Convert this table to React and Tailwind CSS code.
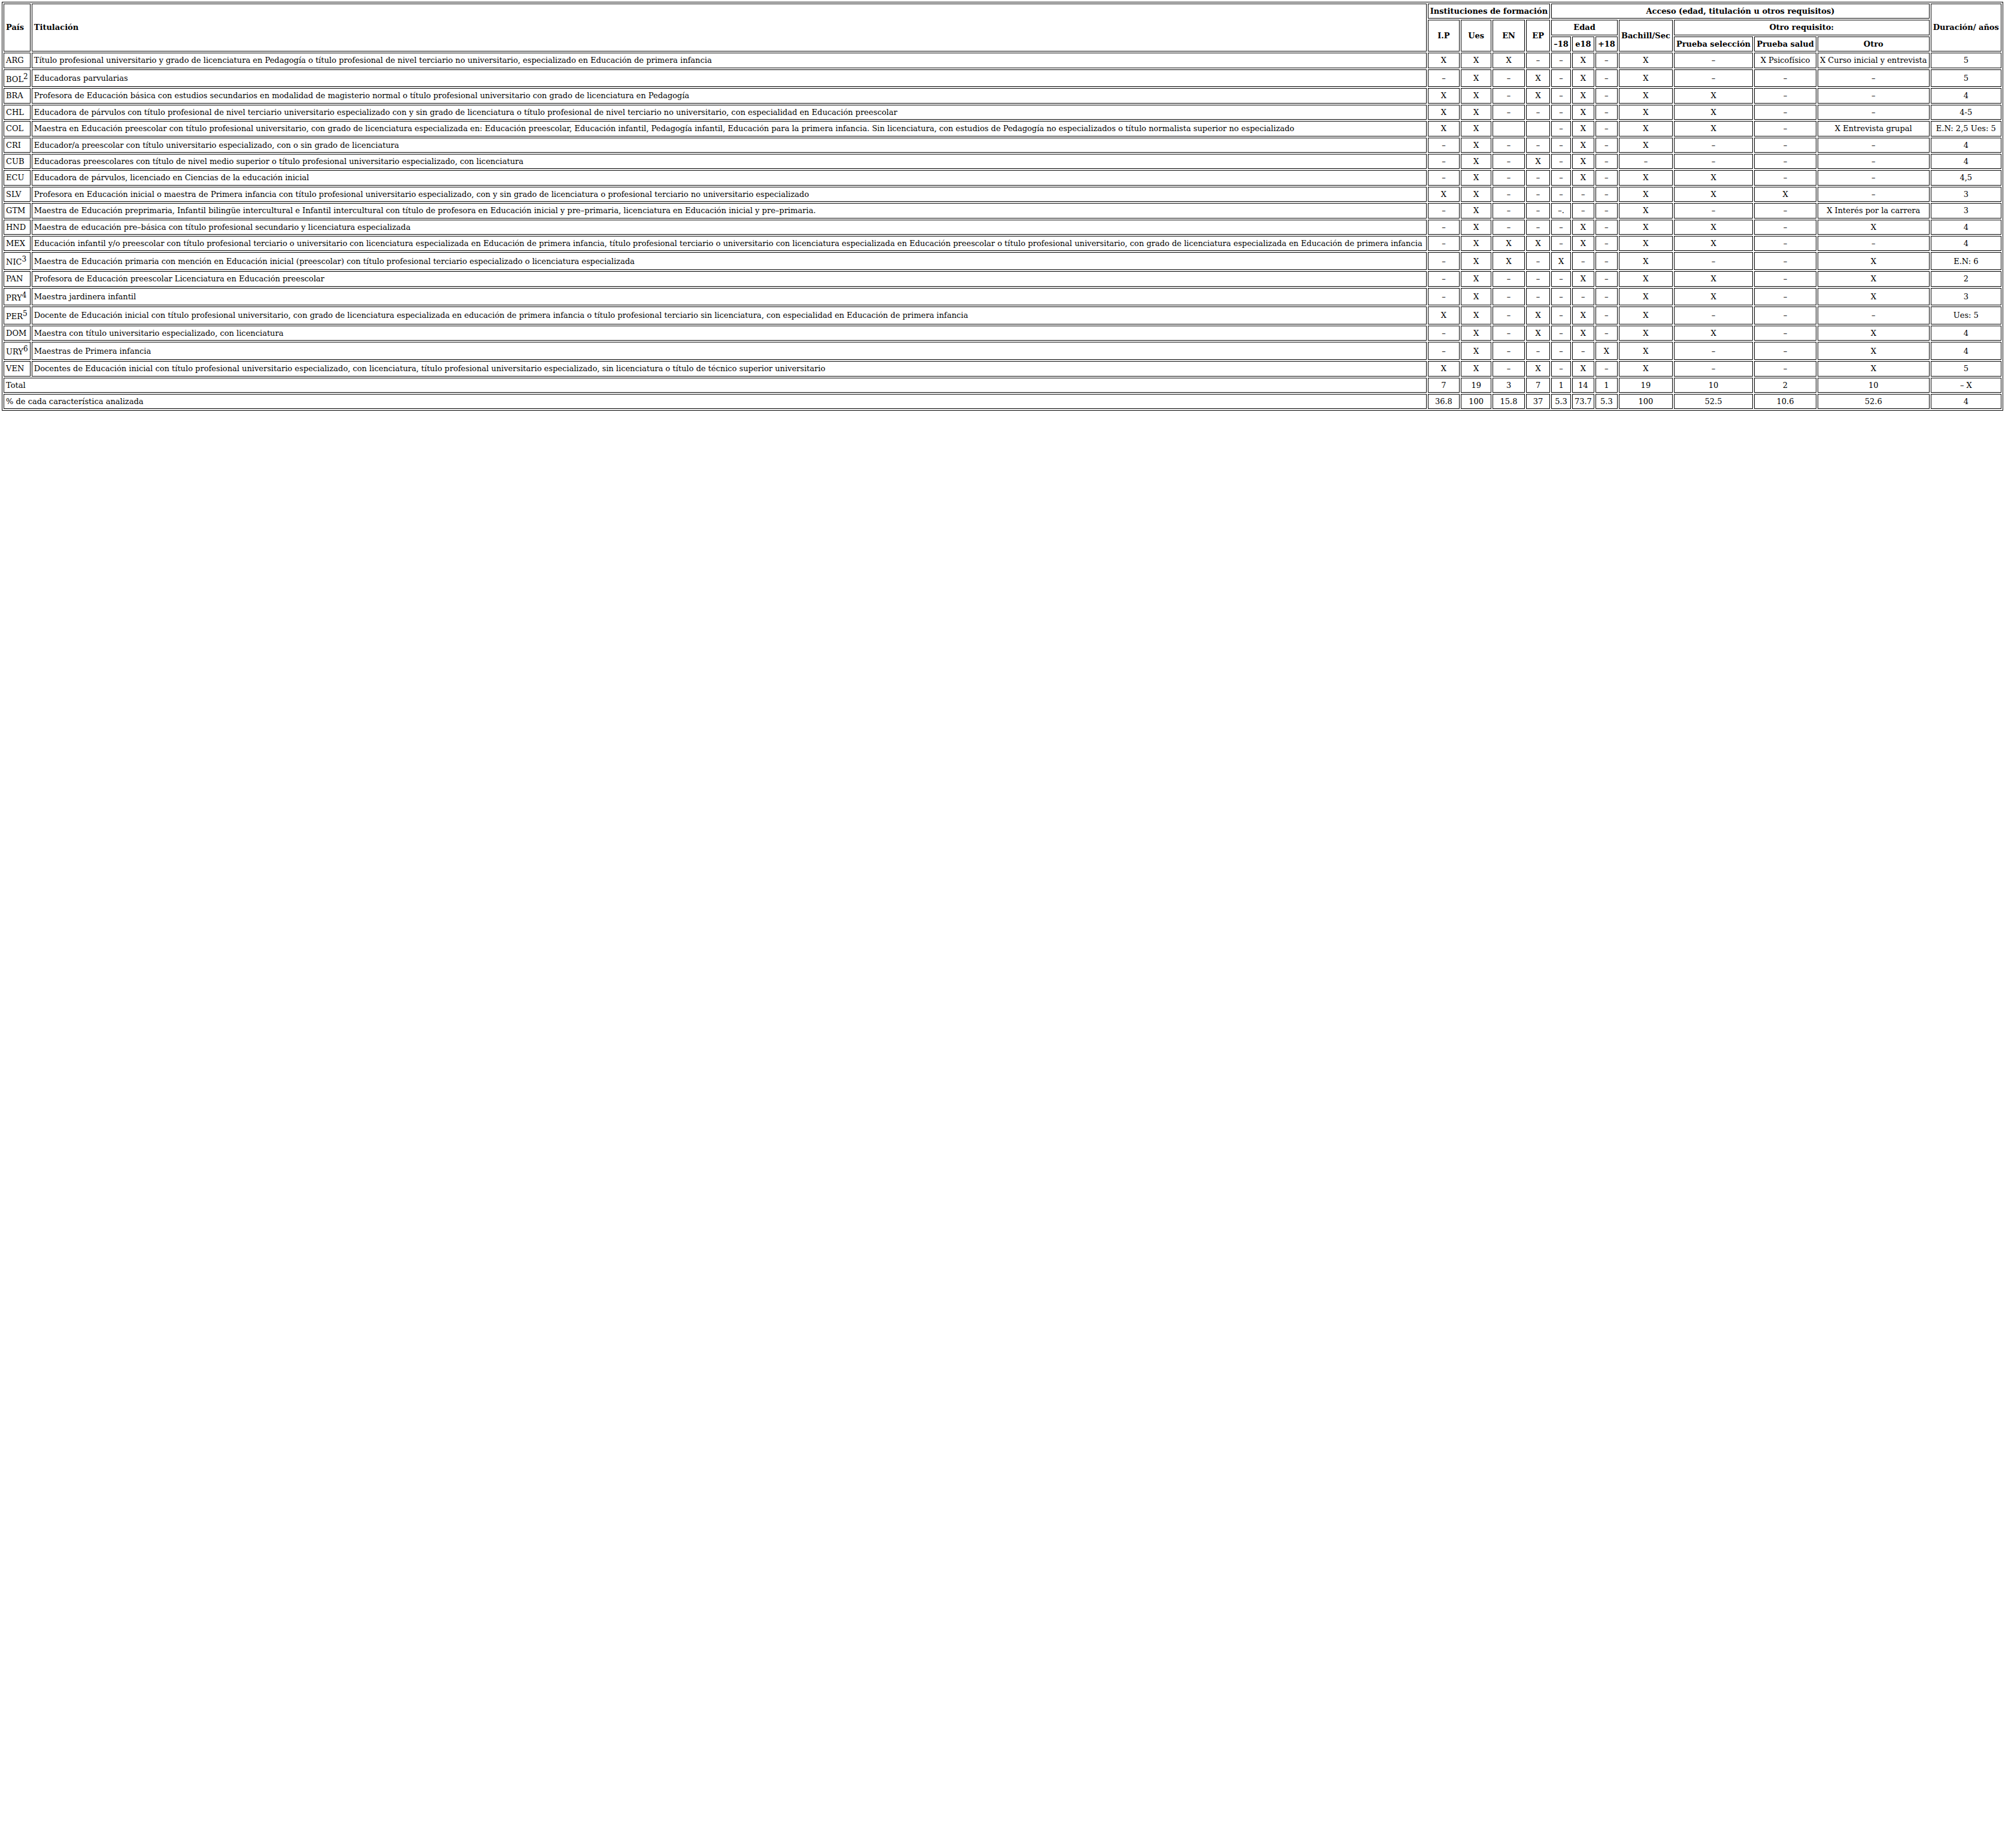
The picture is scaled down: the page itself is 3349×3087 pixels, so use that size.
import React from 'react';

const rows = [
  ['ARG', null, 'Título profesional universitario y grado de licenciatura en Pedagogía o título profesional de nivel terciario no universitario, especializado en Educación de primera infancia', ['X', 'X', 'X', '–', '–', 'X', '–', 'X', '–', 'X Psicofísico', 'X Curso inicial y entrevista', '5']],
  ['BOL', '2', 'Educadoras parvularias', ['–', 'X', '–', 'X', '–', 'X', '–', 'X', '–', '–', '–', '5']],
  ['BRA', null, 'Profesora de Educación básica con estudios secundarios en modalidad de magisterio normal o título profesional universitario con grado de licenciatura en Pedagogía', ['X', 'X', '–', 'X', '–', 'X', '–', 'X', 'X', '–', '–', '4']],
  ['CHL', null, 'Educadora de párvulos con título profesional de nivel terciario universitario especializado con y sin grado de licenciatura o título profesional de nivel terciario no universitario, con especialidad en Educación preescolar', ['X', 'X', '–', '–', '–', 'X', '–', 'X', 'X', '–', '–', '4-5']],
  ['COL', null, 'Maestra en Educación preescolar con título profesional universitario, con grado de licenciatura especializada en: Educación preescolar, Educación infantil, Pedagogía infantil, Educación para la primera infancia. Sin licenciatura, con estudios de Pedagogía no especializados o título normalista superior no especializado', ['X', 'X', '', '', '–', 'X', '–', 'X', 'X', '–', 'X Entrevista grupal', 'E.N: 2,5 Ues: 5']],
  ['CRI', null, 'Educador/a preescolar con título universitario especializado, con o sin grado de licenciatura', ['–', 'X', '–', '–', '–', 'X', '–', 'X', '–', '–', '–', '4']],
  ['CUB', null, 'Educadoras preescolares con título de nivel medio superior o título profesional universitario especializado, con licenciatura', ['–', 'X', '–', 'X', '–', 'X', '–', '–', '–', '–', '–', '4']],
  ['ECU', null, 'Educadora de párvulos, licenciado en Ciencias de la educación inicial', ['–', 'X', '–', '–', '–', 'X', '–', 'X', 'X', '–', '–', '4,5']],
  ['SLV', null, 'Profesora en Educación inicial o maestra de Primera infancia con título profesional universitario especializado, con y sin grado de licenciatura o profesional terciario no universitario especializado', ['X', 'X', '–', '–', '–', '–', '–', 'X', 'X', 'X', '–', '3']],
  ['GTM', null, 'Maestra de Educación preprimaria, Infantil bilingüe intercultural e Infantil intercultural con título de profesora en Educación inicial y pre–primaria, licenciatura en Educación inicial y pre–primaria.', ['–', 'X', '–', '–', '–.', '–', '–', 'X', '–', '–', 'X Interés por la carrera', '3']],
  ['HND', null, 'Maestra de educación pre–básica con título profesional secundario y licenciatura especializada', ['–', 'X', '–', '–', '–', 'X', '–', 'X', 'X', '–', 'X', '4']],
  ['MEX', null, 'Educación infantil y/o preescolar con título profesional terciario o universitario con licenciatura especializada en Educación de primera infancia, título profesional terciario o universitario con licenciatura especializada en Educación preescolar o título profesional universitario, con grado de licenciatura especializada en Educación de primera infancia', ['–', 'X', 'X', 'X', '–', 'X', '–', 'X', 'X', '–', '–', '4']],
  ['NIC', '3', 'Maestra de Educación primaria con mención en Educación inicial (preescolar) con título profesional terciario especializado o licenciatura especializada', ['–', 'X', 'X', '–', 'X', '–', '–', 'X', '–', '–', 'X', 'E.N: 6']],
  ['PAN', null, 'Profesora de Educación preescolar Licenciatura en Educación preescolar', ['–', 'X', '–', '–', '–', 'X', '–', 'X', 'X', '–', 'X', '2']],
  ['PRY', '4', 'Maestra jardinera infantil', ['–', 'X', '–', '–', '–', '–', '–', 'X', 'X', '–', 'X', '3']],
  ['PER', '5', 'Docente de Educación inicial con título profesional universitario, con grado de licenciatura especializada en educación de primera infancia o título profesional terciario sin licenciatura, con especialidad en Educación de primera infancia', ['X', 'X', '–', 'X', '–', 'X', '–', 'X', '–', '–', '–', 'Ues: 5']],
  ['DOM', null, 'Maestra con título universitario especializado, con licenciatura', ['–', 'X', '–', 'X', '–', 'X', '–', 'X', 'X', '–', 'X', '4']],
  ['URY', '6', 'Maestras de Primera infancia', ['–', 'X', '–', '–', '–', '–', 'X', 'X', '–', '–', 'X', '4']],
  ['VEN', null, 'Docentes de Educación inicial con título profesional universitario especializado, con licenciatura, título profesional universitario especializado, sin licenciatura o título de técnico superior universitario', ['X', 'X', '–', 'X', '–', 'X', '–', 'X', '–', '–', 'X', '5']],
];

const totals = [
  ['Total', ['7', '19', '3', '7', '1', '14', '1', '19', '10', '2', '10', '– X']],
  ['% de cada característica analizada', ['36.8', '100', '15.8', '37', '5.3', '73.7', '5.3', '100', '52.5', '10.6', '52.6', '4']],
];

const th = 'border border-black px-[3px] py-[4px] font-bold text-center whitespace-nowrap';
const td = 'border border-black px-[3px] py-[4px] text-center whitespace-nowrap';

export default function App() {
  return (
    <div className="bg-white p-[3px] text-black font-['DejaVu_Serif',serif] text-[13px] leading-[15.4px]">
      <table className="w-full border-separate border-spacing-[2px] border border-black">
        <thead>
          <tr>
            <th rowSpan={3} className={th + ' !text-left'}>País</th>
            <th rowSpan={3} className={th + ' !text-left'}>Titulación</th>
            <th colSpan={4} className={th}>Instituciones de formación</th>
            <th colSpan={7} className={th}>Acceso (edad, titulación u otros requisitos)</th>
            <th rowSpan={3} className={th}>Duración/ años</th>
          </tr>
          <tr>
            <th rowSpan={2} className={th}>I.P</th>
            <th rowSpan={2} className={th}>Ues</th>
            <th rowSpan={2} className={th}>EN</th>
            <th rowSpan={2} className={th}>EP</th>
            <th colSpan={3} className={th}>Edad</th>
            <th rowSpan={2} className={th}>Bachill/Sec</th>
            <th colSpan={3} className={th}>Otro requisito:</th>
          </tr>
          <tr>
            <th className={th}>–18</th>
            <th className={th}>e18</th>
            <th className={th}>+18</th>
            <th className={th}>Prueba selección</th>
            <th className={th}>Prueba salud</th>
            <th className={th}>Otro</th>
          </tr>
        </thead>
        <tbody>
          {rows.map(([code, note, title, cells]) => (
            <tr key={code}>
              <td className="border border-black px-[3px] py-[4px] text-left whitespace-nowrap">
                {code}
                {note && <sup className="static top-0 align-super text-[12px] leading-[normal]">{note}</sup>}
              </td>
              <td className="border border-black px-[3px] py-[4px] text-left whitespace-nowrap">{title}</td>
              {cells.map((c, i) => (
                <td key={i} className={td}>{c}</td>
              ))}
            </tr>
          ))}
          {totals.map(([label, cells]) => (
            <tr key={label}>
              <td colSpan={2} className="border border-black px-[3px] py-[4px] text-left">{label}</td>
              {cells.map((c, i) => (
                <td key={i} className={td}>{c}</td>
              ))}
            </tr>
          ))}
        </tbody>
      </table>
    </div>
  );
}
